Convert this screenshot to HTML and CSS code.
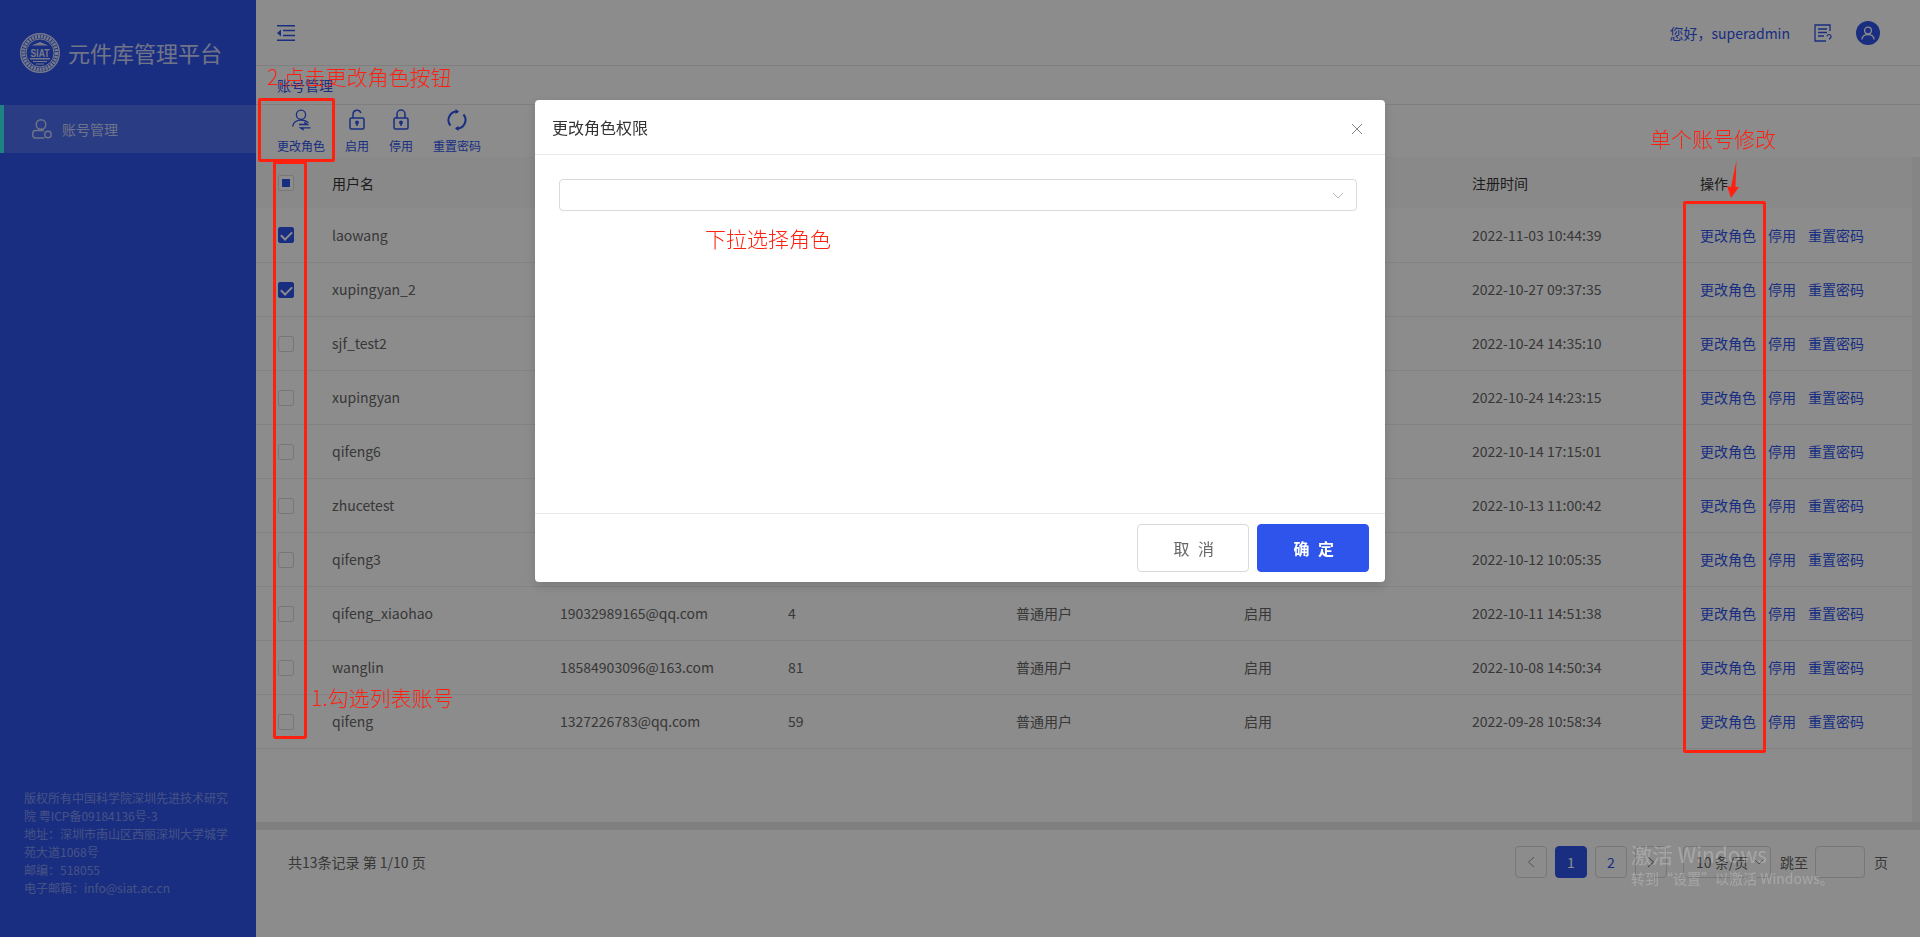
FILE: index.html
```html
<!DOCTYPE html>
<html>
<head>
    <title>元件库管理平台</title>
    <meta charset="utf-8">
    <link rel="stylesheet" href="styles.css">
</head>
<body>
    <aside class="sidebar">
        <div class="logo">
            <svg class="logo-mark" width="40" height="40" viewBox="0 0 40 40">
                <circle cx="20" cy="20" r="19.300" fill="none" stroke="#fff" stroke-width="1.400"/>
                <circle cx="20" cy="20" r="16.500" fill="none" stroke="#fff" stroke-width="3.600" stroke-dasharray="2.200 .8"/>
                <circle cx="20" cy="20" r="14" fill="none" stroke="#fff" stroke-width="1"/>
                <path d="M11.500 12.500L20 9l8.500 3.500zM10 25h20v1.600H10zM13 28h14v1H13zM16 30.500h8v1h-8z" fill="#fff"/>
                <text x="20" y="23.500" text-anchor="middle" textLength="19" lengthAdjust="spacingAndGlyphs" class="logo-text">SIAT</text>
            </svg>
            <span class="logo-title">元件库管理平台</span>
        </div>
        <div class="menu-item">
            <svg width="20" height="20" viewBox="0 0 20 20" fill="none" stroke="currentColor" stroke-width="1.400">
                <circle cx="9" cy="5.500" r="4.800"/>
                <path d="M12 11.500H3.500A2.800 2.800 0 0 0 .8 14.300v1.900a2.800 2.800 0 0 0 2.700 2.800H12.500"/>
                <circle cx="16" cy="15.500" r="3.200"/>
            </svg>
            <span>账号管理</span>
        </div>
        <div class="copyright">
            版权所有中国科学院深圳先进技术研究院 粤ICP备09184136号-3<br>
            地址：深圳市南山区西丽深圳大学城学苑大道1068号<br>
            邮编：518055<br>
            电子邮箱：info@siat.ac.cn
        </div>
    </aside>

    <div class="main">
        <header class="topbar">
            <svg class="fold-icon" width="18" height="16" viewBox="0 0 18 16" fill="#2f54eb">
                <path d="M0 0h18v1.600H0zM6 4.700h12v1.600H6zM6 9.700h12v1.600H6zM0 14.400h18V16H0zM0 8l4-3.500v7z"/>
            </svg>
            <div class="user-area">
                <span class="greeting">您好，superadmin</span>
                <svg class="doc-icon" width="18" height="18" viewBox="0 0 18 18" fill="none" stroke="#2f54eb" stroke-width="1.300">
                    <path d="M16 7V1H1v16h11"/>
                    <path d="M4 5h9M4 8.500h9M4 12h6"/>
                    <path d="M13 12.500a2 2 0 1 1 2.600 1.900v1" stroke-width="1.200"/>
                </svg>
                <span class="avatar">
                    <svg width="14" height="14" viewBox="0 0 14 14" fill="none" stroke="#fff" stroke-width="1.300">
                        <circle cx="7" cy="4.500" r="3.400"/>
                        <path d="M1 13.500c0-3 2.500-5 6-5s6 2 6 5"/>
                    </svg>
                </span>
            </div>
        </header>

        <div class="crumb">账号管理</div>

        <div class="toolbar">
            <div class="tool">
                <svg width="24" height="24" viewBox="0 0 24 24" fill="none" stroke="#2f54eb" stroke-width="1.300">
                    <circle cx="12" cy="6.800" r="4.600"/>
                    <path d="M3.500 18.500c.8-3.800 4.200-6.300 8.500-6.300 3.200 0 6 1.200 7.500 3"/>
                    <path d="M10 16.500h8.500l-2.500-1.800v1.800zM21.500 19.800H11.500l2.500 1.800v-1.800z" fill="#2f54eb"/>
                </svg>
                <span>更改角色</span>
            </div>
            <div class="tool">
                <svg width="24" height="24" viewBox="0 0 24 24" fill="none" stroke="#2f54eb" stroke-width="1.500">
                    <rect x="5" y="10" width="14" height="11" rx="1.500"/>
                    <path d="M8 10V6a4 4 0 0 1 7.800-1"/>
                    <circle cx="12" cy="14.500" r="1.200" fill="#2f54eb"/>
                    <path d="M12 15v3"/>
                </svg>
                <span>启用</span>
            </div>
            <div class="tool">
                <svg width="24" height="24" viewBox="0 0 24 24" fill="none" stroke="#2f54eb" stroke-width="1.500">
                    <rect x="5" y="10" width="14" height="11" rx="1.500"/>
                    <path d="M8 10V6a4 4 0 0 1 8 0v4"/>
                    <circle cx="12" cy="14.500" r="1.200" fill="#2f54eb"/>
                    <path d="M12 15v3"/>
                </svg>
                <span>停用</span>
            </div>
            <div class="tool">
                <svg width="24" height="24" viewBox="0 0 24 24" fill="none" stroke="#2f54eb" stroke-width="2">
                    <path d="M5.500 17.500A8.500 8.500 0 0 1 13 3.600"/>
                    <path d="M18.500 6.500A8.500 8.500 0 0 1 11 20.400"/>
                    <path d="M10.500 1l3.500 2.700-3.500 2.300zM13.500 23l-3.500-2.700 3.500-2.300z" fill="#2f54eb" stroke="none"/>
                </svg>
                <span>重置密码</span>
            </div>
        </div>

        <div class="table-area">
            <table class="user-table">
                <colgroup>
                    <col class="col-check">
                </colgroup>
                <thead>
                    <tr>
                        <th class="check-cell"><span class="check half"></span></th>
                        <th>用户名</th>
                        <th></th>
                        <th></th>
                        <th></th>
                        <th></th>
                        <th>注册时间</th>
                        <th>操作</th>
                    </tr>
                </thead>
                <tbody id="rows"></tbody>
            </table>
        </div>

        <footer class="pager">
            <span class="total">共13条记录 第 1/10 页</span>
            <div class="pages">
                <span class="page-btn">
                    <svg width="8" height="12" viewBox="0 0 8 12" fill="none" stroke="#999" stroke-width="1"><path d="M7 1L1.500 6 7 11"/></svg>
                </span>
                <span class="page-btn current">1</span>
                <span class="page-btn link">2</span>
                <span class="page-btn">
                    <svg width="8" height="12" viewBox="0 0 8 12" fill="none" stroke="#666" stroke-width="1"><path d="M1 1l5.500 5L1 11"/></svg>
                </span>
                <span class="size-select">10 条/页
                    <svg width="10" height="6" viewBox="0 0 10 6" fill="none" stroke="#999" stroke-width="1"><path d="M1 1l4 4 4-4"/></svg>
                </span>
                <span class="jump">跳至</span>
                <span class="jump-input"></span>
                <span class="jump-end">页</span>
            </div>
        </footer>
    </div>

    <div class="mask"></div>

    <div class="modal">
        <div class="modal-head">
            <span>更改角色权限</span>
            <svg class="modal-close" width="12" height="12" viewBox="0 0 12 12" stroke="#888" stroke-width="1"><path d="M1 1l10 10M11 1L1 11"/></svg>
        </div>
        <div class="modal-body">
            <div class="select">
                <svg width="12" height="7" viewBox="0 0 12 7" fill="none" stroke="#bbb" stroke-width="1"><path d="M1 1l5 5 5-5"/></svg>
            </div>
        </div>
        <div class="modal-foot">
            <button class="btn">取 消</button>
            <button class="btn primary">确 定</button>
        </div>
    </div>

    <!-- screenshot annotations, they sit on top of the dialog mask -->
    <div class="mark-box box-tool"></div>
    <div class="mark-box box-check"></div>
    <div class="mark-box box-ops"></div>
    <div class="note note-tool">2.点击更改角色按钮</div>
    <div class="note note-check">1.勾选列表账号</div>
    <div class="note note-ops">单个账号修改</div>
    <div class="note note-select">下拉选择角色</div>
    <svg class="mark-arrow" width="16" height="38" viewBox="0 0 16 38"><path d="M10.500 0L5 27l-4-1 4 12 8-11-3.500 0z" fill="#ff2010"/></svg>

    <div class="watermark">
        <div class="wm-big">激活 Windows</div>
        <div class="wm-small">转到“设置”以激活 Windows。</div>
    </div>

    <script src="rows.js"></script>
</body>
</html>
```

FILE: rows.js
```js
// name, email, count, role, status, time, checked
// the middle columns of the upper rows are hidden behind the dialog
const rows = [
    ['laowang', '', '', '', '', '2022-11-03 10:44:39', true],
    ['xupingyan_2', '', '', '', '', '2022-10-27 09:37:35', true],
    ['sjf_test2', '', '', '', '', '2022-10-24 14:35:10'],
    ['xupingyan', '', '', '', '', '2022-10-24 14:23:15'],
    ['qifeng6', '', '', '', '', '2022-10-14 17:15:01'],
    ['zhucetest', '', '', '', '', '2022-10-13 11:00:42'],
    ['qifeng3', '', '', '', '', '2022-10-12 10:05:35'],
    ['qifeng_xiaohao', '19032989165@qq.com', '4', '普通用户', '启用', '2022-10-11 14:51:38'],
    ['wanglin', '18584903096@163.com', '81', '普通用户', '启用', '2022-10-08 14:50:34'],
    ['qifeng', '1327226783@qq.com', '59', '普通用户', '启用', '2022-09-28 10:58:34']
];

const body = document.getElementById('rows');

rows.forEach(function (r) {
    const tr = document.createElement('tr');
    const box = r[6] ? 'check on' : 'check';
    let html = '<td class="check-cell"><span class="' + box + '"></span></td>';
    for (let i = 0; i < 6; i++) {
        html += '<td>' + r[i] + '</td>';
    }
    html += '<td class="ops"><a>更改角色</a><a>停用</a><a>重置密码</a></td>';
    tr.innerHTML = html;
    body.appendChild(tr);
});
```

FILE: styles.css
```css
* {
    box-sizing: border-box;
}

html, body {
    height: 100%;
}

body {
    margin: 0;
    display: flex;
    overflow: hidden;
    background-color: #fff;
    color: #666;
    font-family: "Noto Sans CJK SC", "Noto Sans", sans-serif;
    font-size: 14px;
}

/* sidebar */
.sidebar {
    width: 256px;
    flex-shrink: 0;
    display: flex;
    flex-direction: column;
    background-color: #2f54eb;
    color: #fff;
}

.logo {
    height: 105px;
    padding: 33px 0 0 20px;
    display: flex;
    align-items: flex-start;
    gap: 8px;
}

.logo-mark {
    opacity: 0.8;
}

.logo-text {
    font-family: "Liberation Sans", sans-serif;
    font-size: 10px;
    font-weight: bold;
    fill: #fff;
}

.logo-title {
    font-size: 22px;
    line-height: 38px;
    opacity: 0.75;
}

.menu-item {
    height: 48px;
    padding-left: 28px;
    display: flex;
    align-items: center;
    gap: 10px;
    border-left: 4px solid #36f0ec;
    background-color: rgba(255, 255, 255, 0.15);
    color: rgba(255, 255, 255, 0.7);
}

.copyright {
    margin-top: auto;
    margin-bottom: 40px;
    padding: 0 24px;
    font-size: 12px;
    line-height: 18px;
    color: rgba(255, 255, 255, 0.4);
}

/* main */
.main {
    flex: 1;
    min-width: 0;
    display: flex;
    flex-direction: column;
}

.topbar {
    height: 66px;
    flex-shrink: 0;
    padding: 0 40px 0 21px;
    display: flex;
    align-items: center;
    justify-content: space-between;
    border-bottom: 1px solid #e8e8e8;
}

.user-area {
    display: flex;
    align-items: center;
    color: #2f54eb;
}

.doc-icon {
    margin-left: 24px;
}

.avatar {
    width: 24px;
    height: 24px;
    margin-left: 24px;
    display: flex;
    align-items: center;
    justify-content: center;
    border-radius: 50%;
    background-color: #2f54eb;
}

.crumb {
    height: 39px;
    flex-shrink: 0;
    padding: 9px 0 0 21px;
    border-bottom: 1px solid #e8e8e8;
    color: #2f54eb;
    line-height: 20px;
}

.toolbar {
    height: 52px;
    flex-shrink: 0;
    padding: 0 0 0 21px;
    display: flex;
    gap: 20px;
}

.tool {
    display: flex;
    flex-direction: column;
    align-items: center;
    padding-top: 3px;
    font-size: 12px;
    line-height: 18px;
    color: #2f54eb;
}

.tool span {
    margin-top: 5px;
}

.table-area {
    flex: 1;
    min-height: 0;
    border-right: 8px solid #f2f2f2;
}

.user-table {
    width: 1656px;
    table-layout: fixed;
    border-collapse: collapse;
    box-sizing: content-box;
    background-color: #fff;
}

.user-table th,
.user-table td {
    width: 228px;
    padding: 0 0 0 16px;
    text-align: left;
    font-weight: normal;
    white-space: nowrap;
}

.user-table th {
    height: 51px;
    color: #333;
    background-color: #fafafa;
}

.user-table td {
    height: 54px;
    border-bottom: 1px solid #eee;
}

.user-table .col-check,
.user-table .check-cell {
    width: 60px;
    padding: 1px 0 0 22px;
}

.check {
    display: block;
    position: relative;
    width: 16px;
    height: 16px;
    border: 1px solid #d9d9d9;
    border-radius: 2px;
    background-color: #fff;
}

.check.half::after {
    content: "";
    position: absolute;
    left: 3px;
    top: 3px;
    width: 8px;
    height: 8px;
    background-color: #2f54eb;
}

.check.on {
    border-color: #2f54eb;
    background-color: #2f54eb;
}

.check.on::after {
    content: "";
    position: absolute;
    left: 4px;
    top: 1px;
    width: 5px;
    height: 9px;
    border: solid #fff;
    border-width: 0 2px 2px 0;
    transform: rotate(45deg);
}

.ops a {
    margin-right: 12px;
    color: #2f54eb;
}

/* pager */
.pager {
    height: 115px;
    flex-shrink: 0;
    padding: 16px 32px 0 32px;
    display: flex;
    align-items: flex-start;
    justify-content: space-between;
    border-top: 8px solid #e8e8e8;
}

.total {
    line-height: 32px;
}

.pages {
    display: flex;
    align-items: center;
}

.page-btn {
    width: 32px;
    height: 32px;
    margin-right: 8px;
    display: flex;
    align-items: center;
    justify-content: center;
    border: 1px solid #d9d9d9;
    border-radius: 4px;
}

.page-btn.current {
    border-color: #2f54eb;
    background-color: #2f54eb;
    color: #fff;
}

.page-btn.link {
    color: #2f54eb;
}

.size-select {
    width: 88px;
    height: 32px;
    margin-left: 8px;
    padding-left: 12px;
    display: flex;
    align-items: center;
    gap: 6px;
    border: 1px solid #d9d9d9;
    border-radius: 4px;
}

.jump {
    margin-left: 9px;
}

.jump-input {
    width: 50px;
    height: 32px;
    margin-left: 7px;
    border: 1px solid #d9d9d9;
    border-radius: 4px;
}

.jump-end {
    margin-left: 9px;
}

/* dialog */
.mask {
    position: fixed;
    inset: 0;
    background-color: rgba(0, 0, 0, 0.45);
}

.modal {
    position: fixed;
    left: 535px;
    top: 100px;
    width: 850px;
    height: 482px;
    display: flex;
    flex-direction: column;
    border-radius: 4px;
    background-color: #fff;
    box-shadow: 0 4px 12px rgba(0, 0, 0, 0.15);
}

.modal-head {
    height: 55px;
    padding: 0 22px 0 17px;
    display: flex;
    align-items: center;
    justify-content: space-between;
    border-bottom: 1px solid #e8e8e8;
    color: #333;
    font-size: 16px;
}

.modal-close {
    margin-top: 3px;
}

.modal-body {
    flex: 1;
    padding: 24px 28px 0 24px;
}

.select {
    height: 32px;
    padding-right: 12px;
    display: flex;
    align-items: center;
    justify-content: flex-end;
    border: 1px solid #d9d9d9;
    border-radius: 4px;
}

.modal-foot {
    height: 69px;
    padding: 10px 16px 0 0;
    display: flex;
    justify-content: flex-end;
    align-items: flex-start;
    gap: 8px;
    border-top: 1px solid #e8e8e8;
}

.btn {
    width: 112px;
    height: 48px;
    padding: 0 0 0 4px;
    border: 1px solid #d9d9d9;
    border-radius: 4px;
    background-color: #fff;
    color: #666;
    font-family: inherit;
    font-size: 16px;
    letter-spacing: 2.5px;
}

.btn.primary {
    border-color: #2f54eb;
    background-color: #2f54eb;
    color: #fff;
    font-weight: bold;
}

/* red annotations */
.mark-box {
    position: fixed;
    border: 3px solid #ff2010;
    border-radius: 2px;
}

.box-tool {
    left: 258px;
    top: 98px;
    width: 77px;
    height: 64px;
}

.box-check {
    left: 273px;
    top: 161px;
    width: 34px;
    height: 578px;
}

.box-ops {
    left: 1683px;
    top: 201px;
    width: 83px;
    height: 552px;
}

.note {
    position: fixed;
    color: #ff2010;
    font-size: 21px;
    font-weight: 300;
    line-height: 28px;
    white-space: nowrap;
}

.note-tool {
    left: 267px;
    top: 62px;
}

.note-check {
    left: 311px;
    top: 683px;
}

.note-ops {
    left: 1650px;
    top: 124px;
}

.note-select {
    left: 705px;
    top: 224px;
}

.mark-arrow {
    position: fixed;
    left: 1726px;
    top: 160px;
}

.watermark {
    position: fixed;
    left: 1631px;
    top: 840px;
    color: rgba(255, 255, 255, 0.22);
}

.wm-big {
    font-size: 21px;
    line-height: 28px;
}

.wm-small {
    font-size: 14px;
    line-height: 20px;
}
```
